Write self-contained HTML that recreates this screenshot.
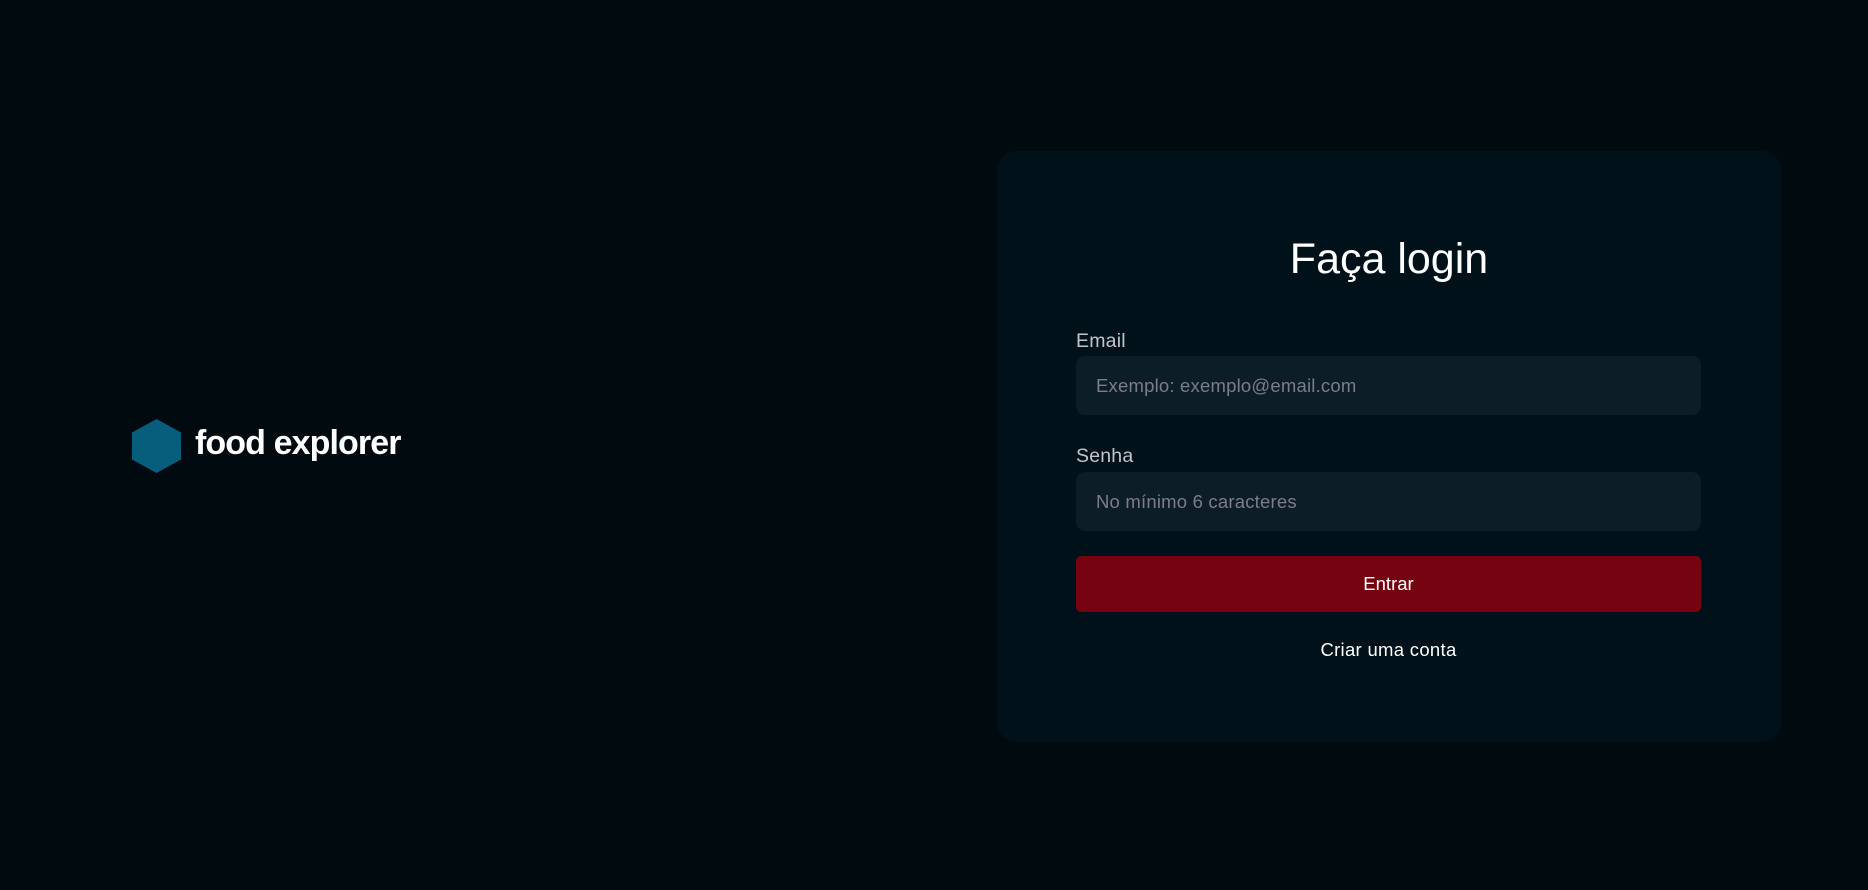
<!DOCTYPE html>
<html><head><meta charset="utf-8"><style>
*{margin:0;padding:0;box-sizing:border-box}
html,body{width:1868px;height:890px;background:#000a0f;overflow:hidden;font-family:"Liberation Sans",sans-serif}
.logo{position:absolute;left:132px;top:419px;display:flex;align-items:center}
.logo svg{display:block}
.logo span{position:absolute;left:63px;top:5px;color:#fff;font-weight:bold;font-size:34px;white-space:nowrap;letter-spacing:-0.9px}
.card{position:absolute;left:997px;top:151px;width:784px;height:591px;background:#001119;border-radius:19px}
h1{position:absolute;top:231px;text-align:center;color:#fff;font-weight:normal;font-size:43px;line-height:56px}
.abs{position:absolute}
.lbl{left:1076px;color:#c4c4cc;font-size:19.5px;line-height:24px;letter-spacing:0.2px}
.inp{left:1076px;width:625px;height:59px;background:#0d1d25;border-radius:9px;color:#7c7c8a;font-size:18.5px;line-height:59px;padding-left:20px;letter-spacing:0.2px}
.btn{left:1076px;top:556px;width:625px;height:56px;background:#750310;border-radius:5px;color:#fff;font-size:18.5px;line-height:56px;text-align:center}
.link{left:1076px;width:625px;top:638px;text-align:center;color:#fff;font-size:18.5px;line-height:24px;letter-spacing:0.3px}
</style></head><body>
<div class="logo"><svg width="49" height="54" viewBox="0 0 49 54"><polygon points="24.5,0 49,13.5 49,40.5 24.5,54 0,40.5 0,13.5" fill="#065e7c"/></svg><span>food explorer</span></div>
<div class="card"></div>
<h1 style="left:997px;width:784px">Faça login</h1>
<div class="abs lbl" style="top:329px">Email</div>
<div class="abs inp" style="top:356px">Exemplo: exemplo@email.com</div>
<div class="abs lbl" style="top:444px">Senha</div>
<div class="abs inp" style="top:472px">No mínimo 6 caracteres</div>
<div class="abs btn">Entrar</div>
<div class="abs link">Criar uma conta</div>
</body></html>
